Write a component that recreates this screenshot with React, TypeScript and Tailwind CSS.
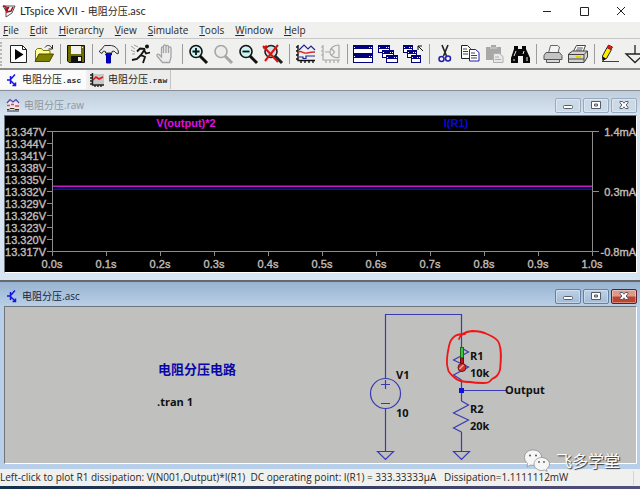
import type { ReactNode } from "react";
import clsx from "clsx";

const MENUS = ["File", "Edit", "Hierarchy", "View", "Simulate", "Tools", "Window", "Help"];
const VOLTS = ["13.347V", "13.344V", "13.341V", "13.338V", "13.335V", "13.332V", "13.329V", "13.326V", "13.323V", "13.320V", "13.317V"];
const TIMES = ["0.0s", "0.1s", "0.2s", "0.3s", "0.4s", "0.5s", "0.6s", "0.7s", "0.8s", "0.9s", "1.0s"];
const AMPS = ["1.4mA", "0.3mA", "-0.8mA"];

/* ---------- toolbar drawings, all on a 24 x 24 grid ---------- */

const lens = (color: string, glass: string) => (
  <>
    <path d="M14 14l7 7" stroke={color} strokeWidth="3" />
    <circle cx="10" cy="9.5" r="6" fill={glass} stroke={color} strokeWidth="1.6" />
  </>
);

const miniWindow = (x: number, y: number, w: number, h: number) => (
  <g key={`${x}-${y}`} shapeRendering="crispEdges">
    <rect x={x} y={y} width={w} height={h} fill="#000080" />
    <rect x={x + 1} y={y + 4} width={w - 2} height={h - 5} fill="#fff" />
    <path d={`M${x + 1} ${y + 2}h1M${x + w - 4} ${y + 2}h1M${x + w - 2} ${y + 2}h1`} stroke="#fff" />
  </g>
);

const ICONS: Record<string, ReactNode> = {
  Run: (
    <>
      <path d="M3.5 3.5h12l4 4v13h-16z" fill="#fff" stroke="#222" />
      <path d="M15.5 3.5v4h4" fill="none" stroke="#222" />
      <path d="M8 7v11l8.500-5.500z" fill="#000" />
    </>
  ),
  Open: (
    <>
      <path d="M3.500 19V8.500l2-2h4l1.500 2h7v4" fill="#ffff9a" stroke="#77770c" />
      <path d="M3 19.500l4-7.500h14.500l-4 7.500z" fill="#808000" stroke="#4a4a00" />
      <path d="M13 5.500c2-3 5-2.500 7 .5m.5-3v4h-4" fill="none" stroke="#222" />
    </>
  ),
  Save: (
    <>
      <path d="M3.500 3.500h17v17h-15.500l-1.500-1.500z" fill="#6e6e00" stroke="#111" />
      <path d="M7 4h10v8H7z" fill="#f0f0f0" />
      <path d="M7 14h11v6H7z" fill="#111" />
      <path d="M14 15h3v4h-3z" fill="#eee" />
      <path d="M18 5h1v1h-1z" fill="#fff" />
    </>
  ),
  "Control Panel": (
    <>
      <path d="M10.500 10h4v3h-1v8h-4v-8h-1z" fill="#0000c8" stroke="#0000a0" />
      <path d="M2.500 10c0-1.500.5-2 1.500-2l3.500-4.500h7c3.500.5 6.500 3 7 6.500l-.5 2-2-1-2-2-2 .5v1.500H8.500V9.500L6.500 9 5 11.500z" fill="#ececec" stroke="#333" />
    </>
  ),
  Simulate: (
    <>
      <circle cx="18" cy="4.500" r="2" fill="#111" />
      <path d="M16 7l-4 6 4 2-2 6M12 13l-4 4-5 1M16 7l-5-.5-3 3M15 8l2 3.500 4-1" fill="none" stroke="#111" strokeWidth="1.8" />
      <path d="M2 4l4 3M5 3l4 2M2 8l4 2M3 12l3 0" stroke="#888" strokeWidth=".8" />
    </>
  ),
  Halt: (
    <path
      d="M8.500 20.500L3 14c-.5-1.500 1-2.500 2-1.500L7.500 15V6c0-1.500 2-1.500 2 0v5V4c0-1.500 2.500-1.500 2.500 0v7-6.500c0-1.500 2.500-1.500 2.500 0V11 6c0-1.500 2.500-1.500 2.500 0v9.500l-1.500 5z"
      fill="#ececec"
      stroke="#a4a4a4"
      strokeWidth="1.300"
    />
  ),
  "Zoom in": (
    <>
      {lens("#111", "#c8f4f4")}
      <path d="M6.500 9.500h7M10 6v7" stroke="#111" strokeWidth="1.800" />
    </>
  ),
  "Zoom area": lens("#a6a6a6", "#ececec"),
  "Zoom out": (
    <>
      {lens("#111", "#c8f4f4")}
      <path d="M6.500 9.500h7" stroke="#111" strokeWidth="1.800" />
    </>
  ),
  "Zoom to fit": (
    <>
      {lens("#222", "#c8e4e4")}
      <path d="M2 4l15 16M17 3L4 19M2 6l4-2" fill="none" stroke="#e01010" strokeWidth="2" />
    </>
  ),
  Autorange: (
    <>
      <path d="M4 3v15.500h17M2 5h2M2 9h2M2 13h2M2 17h2M7 18v3M11 18v3M15 18v3M19 18v3" fill="none" stroke="#111" strokeWidth="1.400" />
      <path d="M5 8l5-5 4 4 3-3 4 4M5 15h4v1.500h3V14h9" fill="none" stroke="#22229c" strokeWidth="1.200" />
      <path d="M4 10c4-2 5 2 9 1s4-1 8-1" fill="none" stroke="#d03030" strokeWidth="1.400" />
    </>
  ),
  "Pick traces": (
    <path d="M4 3v15h17M2 5h2M2 9h2M2 13h2M7 18v3M11 18v3M15 18v3M19 18v3M20 3c-5 0-9 3-9 7s4 6 9 5.500M20 3v13M6 10h5M12 6l3.500 4-3 4" fill="none" stroke="#a8a8a8" strokeWidth="1.200" />
  ),
  "Tile windows": [miniWindow(2, 3, 20, 9), miniWindow(2, 12, 20, 9)],
  "Cascade windows": [miniWindow(2, 3, 12, 8), miniWindow(6, 8, 12, 8), miniWindow(10, 13, 12, 8)],
  "Close windows": (
    <>
      {[miniWindow(2, 3, 10, 8), miniWindow(6, 8, 10, 8), miniWindow(10, 13, 10, 8)]}
      <path d="M17 4l5 5M17 8V4h4" fill="none" stroke="#111" />
    </>
  ),
  Cut: (
    <>
      <path d="M9 3l4.500 11M15 3l-4.500 11" stroke="#222" strokeWidth="1.600" />
      <circle cx="8.500" cy="17" r="2.500" fill="none" stroke="#2020a8" strokeWidth="1.500" />
      <circle cx="15" cy="16.500" r="2.500" fill="none" stroke="#2020a8" strokeWidth="1.500" />
    </>
  ),
  Copy: (
    <>
      <path d="M3.500 3.500h6l3 3v10h-9z" fill="#fff" stroke="#222" />
      <path d="M5 7h4M5 9.500h5M5 12h5" stroke="#444" />
      <path d="M11.500 7.500h6l3.500 3v8.500h-9.500z" fill="#fff" stroke="#2020a8" />
      <path d="M13 11h4M13 13.500h6M13 16h6" stroke="#444" />
    </>
  ),
  Paste: (
    <>
      <path d="M3 5h5V3h5v2h5v13H3z" fill="#a8a8a8" />
      <path d="M7 6h7" stroke="#d8d8d8" />
      <path d="M10.500 11.500h6l3.500 3v6h-9.500z" fill="#e8e8e8" stroke="#b0b0b0" />
      <path d="M12 15h4M12 17.500h6" stroke="#b0b0b0" />
    </>
  ),
  Find: (
    <>
      <path d="M6 4h4v3h4V4h4v3l4 9v5h-7v-7h-5v7H3v-5l3-9z" fill="#080808" />
      <path d="M8 9l-2 5M16 9l-1 3M6 17v2M19 15v4" stroke="#e8e8e8" />
    </>
  ),
  "Print setup": (
    <>
      <path d="M7.500 11l2-7.500h7l2 1.500-1.500 6" fill="#f4f4f4" stroke="#666" />
      <path d="M5 10.500h13.500l2.500 3v4h-18v-4z" fill="#c4c4c4" stroke="#555" />
      <path d="M5.500 17.500h13v3h-13z" fill="#d8d8d8" stroke="#555" />
    </>
  ),
  Print: (
    <>
      <path d="M7 10l3.500-6.500h9L17 10" fill="#fff" stroke="#444" />
      <path d="M11 6h6M10 8h6" stroke="#555" />
      <path d="M2.500 12l4-3h15v6l-3.500 5.500H2.500z" fill="#d4d4d4" stroke="#444" />
      <path d="M3 12.500h15V20M18 12.500l3.500-3.500M3 17h15" fill="none" stroke="#444" />
      <path d="M10 15h5" stroke="#e4d400" strokeWidth="2" />
    </>
  ),
  Draw: (
    <>
      <path d="M5 18l-.5-4L9 5.500l4.500 2-5 9z" fill="#ffee00" stroke="#222" />
      <path d="M4.500 19.500v-5l3.500 2z" fill="#111" />
      <path d="M9 5.500l1.500-2.500 4 2-1.500 2.500z" fill="#e01818" stroke="#b01010" />
      <path d="M4 19.500h17" stroke="#3030b0" />
    </>
  ),
  Ground: <path d="M12 3v9M3 12h18l-9 8.500z" fill="none" stroke="#222" strokeWidth="1.300" />,
};

const TOOL_GROUPS = [
  ["Run", "Open"],
  ["Save"],
  ["Control Panel"],
  ["Simulate", "Halt"],
  ["Zoom in", "Zoom area", "Zoom out", "Zoom to fit"],
  ["Autorange", "Pick traces"],
  ["Tile windows", "Cascade windows", "Close windows"],
  ["Cut", "Copy", "Paste", "Find"],
  ["Print setup", "Print"],
  ["Draw", "Ground"],
];

function SchematicIcon() {
  return (
    <svg viewBox="0 0 12 14" className="h-3.5 w-3 shrink-0" fill="none" stroke="#1414e0" strokeWidth="1.5">
      <path d="M1 7h3M4.500 3v8M5 6l4-4.500M5 8l4 4M9.500 9.500v3H6.500" />
    </svg>
  );
}

function WaveIcon({ faded = false }: { faded?: boolean }) {
  return (
    <svg viewBox="0 0 14 14" className="size-3.5 shrink-0" fill="none">
      {faded ? (
        <>
          <rect x="1" y="4" width="12" height="7" fill="#f0e4e4" />
          <path d="M1 5l3-3.500L7 4l3-2.500L13 5" stroke="#4848b8" strokeWidth="1.200" />
          <path d="M1 7.500h3M5 6.500h3M9 8h4" stroke="#d05050" strokeWidth="1.400" />
          <path d="M1 11.500h2l1-1h4l1 1h4M1 13h12" stroke="#333" />
        </>
      ) : (
        <>
          <rect x="1" y="1" width="13" height="11" fill="#c8c8c8" />
          <path d="M2.500 0v12H14M0 2h2M0 5h2M0 8h2M0 11h2M5 12v2M8 12v2M11 12v2" stroke="#222" strokeWidth="1.400" />
          <path d="M3 7l3-3 3 2 4-2" stroke="#e01818" strokeWidth="1.600" />
        </>
      )}
    </svg>
  );
}

function CaptionButton({ kind, active }: { kind: "Minimize" | "Restore" | "Close"; active: boolean }) {
  const red = active && kind === "Close";
  return (
    <button
      aria-label={kind}
      className={clsx(
        "flex h-[15px] w-[26px] items-center justify-center rounded-[2px] border shadow-[inset_0_0_0_1px_rgba(255,255,255,0.35)]",
        red && "border-[#5c2028] bg-linear-to-b from-[#dc9a8c] from-45% to-[#bc4430] to-55%",
        !red && active && "border-[#66809f] bg-linear-to-b from-[#bdd0e6] to-[#a2bcd8]",
        !red && !active && "border-[#99aabf] bg-[#ccd9e7]",
      )}
    >
      <svg viewBox="0 0 12 10" className="h-2.5 w-3" fill="#fff" stroke="#555c68">
        {kind === "Minimize" && <rect x="1.500" y="5.500" width="9" height="3" rx="1" />}
        {kind === "Restore" && <path fillRule="evenodd" d="M1.500 1.500h9v7h-9zM4.500 4h3v2h-3z" />}
        {kind === "Close" && <path d="M2 1.500h2.500L6 3.200l1.500-1.700H10v1.300L8 5l2 2.200v1.300H7.500L6 6.800 4.500 8.500H2V7.200L4 5 2 2.800z" />}
      </svg>
    </button>
  );
}

type ChildProps = { title: string; icon: ReactNode; active?: boolean; children: ReactNode };

function ChildWindow({ title, icon, active = false, children }: ChildProps) {
  return (
    <section
      className={clsx(
        "border-t pr-[3px] pl-1",
        active ? "border-t-2 border-[#66686c] bg-[#b8cfe9] pb-[5px]" : "border-[#8a8e94] bg-[#d7e4f2] pb-[7px]",
      )}
    >
      <header
        className={clsx(
          "-mr-[3px] -ml-1 flex h-6 items-center gap-1 pt-1 pr-[3px] pl-1.5",
          active ? "bg-linear-to-b from-[#98b3d0] to-[#b9cfe8]" : "bg-linear-to-b from-[#c0cddb] to-[#d7e4f2]",
        )}
      >
        {icon}
        <h2 className={clsx("flex-1 text-[10px]", active ? "text-[#1c2430]" : "text-[#8d959f]")}>{title}</h2>
        <div className="flex gap-0.5">
          <CaptionButton kind="Minimize" active={active} />
          <CaptionButton kind="Restore" active={active} />
          <CaptionButton kind="Close" active={active} />
        </div>
      </header>
      <div className="border-t border-l border-[#70757c] border-r border-r-white border-b border-b-white">{children}</div>
    </section>
  );
}

function WavePlot() {
  return (
    <svg viewBox="5 116 631 156" className="block h-auto w-full bg-black font-['Liberation_Sans'] text-[11px]">
      <g stroke="#8c8c8c" shapeRendering="crispEdges" fill="none">
        <path d="M47 131.500H599M47 251.500H599M52.500 131v125M592.500 131v125M593 191.500h6" />
        {VOLTS.map((v, i) => (
          <path key={v} d={`M47 ${131.5 + i * 12}h5`} />
        ))}
        {TIMES.map((t, i) => (
          <path key={t} d={`M${52.5 + i * 54} 251v5`} />
        ))}
      </g>
      <rect x="53" y="185.500" width="539" height="1.500" fill="#c01cc0" />
      <rect x="53" y="188.500" width="539" height="1.500" fill="#0c0cc0" />
      <g fill="#c0bbb5" stroke="#c0bbb5" strokeWidth=".4">
        {VOLTS.map((v, i) => (
          <text key={v} x="46" y={136 + i * 12} textAnchor="end">{v}</text>
        ))}
        {TIMES.map((t, i) => (
          <text key={t} x={52 + i * 54} y="268" textAnchor="middle">{t}</text>
        ))}
        {AMPS.map((a, i) => (
          <text key={a} x="636" y={136 + i * 60} textAnchor="end">{a}</text>
        ))}
      </g>
      <g fontWeight="bold" textAnchor="middle">
        <text x="186" y="127" fill="#e010e0">V(output)*2</text>
        <text x="456" y="127" fill="#0808dc">I(R1)</text>
      </g>
    </svg>
  );
}

function Schematic() {
  return (
    <svg viewBox="5 307 631 156" className="block h-auto w-full bg-[#c0c0be] text-[11px]">
      <g fill="none" stroke="#3a3ab4" strokeWidth="1.200">
        <path d="M385.500 379V314.500H461.500V348M385.500 409v42M461.500 380v21M461.500 432v19M461 390.500h45" />
        <circle cx="385.500" cy="393.500" r="15" />
        <path d="M381 384.500h9M385.500 380v9M381 403.500h9" />
        <path d="M461.500 348l7 4-15 8 15 7-15 8 8 5" />
        <path d="M461.500 401l7 4-15 8 15 7-15 8 8 4" />
        <path d="M377.500 451.500h16l-8 8zM453.500 451.500h16l-8 8z" />
      </g>
      <rect x="459" y="388" width="5" height="5" fill="#1010e0" />

      {/* current probe on R1 */}
      <rect x="460.500" y="347.500" width="3" height="11" fill="#3cc43c" stroke="#1c6c1c" />
      <rect x="460.500" y="358" width="3" height="7" fill="#c01818" stroke="#601010" />
      <circle cx="462" cy="367.500" r="4" fill="#d83028" stroke="#701010" />
      <path d="M459.500 369l4-4" stroke="#f4b0a8" strokeWidth="1.200" />

      <g fill="#101010" fontWeight="bold">
        <text x="396" y="379">V1</text>
        <text x="396" y="417">10</text>
        <text x="470" y="360">R1</text>
        <text x="470" y="377">10k</text>
        <text x="470" y="413">R2</text>
        <text x="470" y="430">20k</text>
        <text x="505" y="394">Output</text>
        <text x="157" y="406">.tran 1</text>
        <text x="158" y="374" fill="#0808a8" className="text-[13px]">电阻分压电路</text>
      </g>

      <path
        d="M459 339c1-4 5-7 13-8 7 0 11 1 15 3 7 3 11 6 12 9 3 8 2 17 1 27-2 6-4 7-8 9-3 4-5 4-9 4-5 0-8 0-13-1-7 0-12-1-15-4-5-4-7-6-7-9-2-5-1-14 1-23 1-5 3-8 6-10 3-2 6-2 10-2"
        fill="none"
        stroke="#f01414"
        strokeWidth="1.800"
        strokeLinecap="round"
      />
    </svg>
  );
}

export default function App() {
  return (
    <div className="relative overflow-hidden bg-[#f0f0ee] font-['Open_Sans','Noto_Sans_CJK_SC',sans-serif] text-[10px] text-[#282828]">
      <header className="flex h-[22px] items-center bg-white pl-0.5">
        <svg viewBox="0 0 14 14" className="size-3.5" fill="none">
          <path d="M1 2h12l-3 7-6 4V7z" fill="#fff" stroke="#555" />
          <path d="M1 2l3 1v4M6 3l-1 5 4-1 2-4M4 7l3-4" stroke="#a01020" strokeWidth="1.600" />
        </svg>
        <h1 className="flex-1 pl-1">
          <span className="font-['Lato'] text-[11px]">LTspice XVII - </span>电阻分压
          <span className="font-['Lato'] text-[11px]">.asc</span>
        </h1>
        <div className="flex">
          {["M1 5.500h8", "M1.500 1.500h8v8h-8z", "M1 1l8 8M9 1l-8 8"].map((d, i) => (
            <button key={d} aria-label={["Minimize", "Maximize", "Close"][i]} className="flex h-[18px] w-[37px] items-center justify-center">
              <svg viewBox="0 0 11 11" className="size-[11px]" fill="none" stroke="#222">
                <path d={d} />
              </svg>
            </button>
          ))}
        </div>
      </header>

      <nav className="flex h-[17px] items-center gap-[11px] border-b border-[#c8c8c8] pl-[3px]">
        {MENUS.map((m) => (
          <button key={m}>
            <span className="underline">{m[0]}</span>
            {m.slice(1)}
          </button>
        ))}
      </nav>

      <div className="-mr-2 flex h-[31px] items-center border-b-2 border-[#8c8c8c]">
        <div className="h-6 w-[7px] shrink-0 border-l-2 border-dotted border-[#b8b8b8]" />
        {TOOL_GROUPS.map((group, i) => (
          <div key={group[0]} className={clsx("flex items-center", i > 0 && "flex-auto")}>
            {i > 0 && (
              <div className="flex flex-1 justify-center">
                <div className="h-5 w-px bg-[#9c9c9c]" />
              </div>
            )}
            {group.map((name) => (
              <button key={name} aria-label={name} className="w-[25px] shrink-0">
                <svg viewBox="0 0 24 24" className="size-6" fill="none">
                  {ICONS[name]}
                </svg>
              </button>
            ))}
          </div>
        ))}
      </div>

      <div className="flex h-5 items-start gap-0.5">
        <button className="flex h-[19px] w-[86px] items-center gap-1 bg-[#fbfbfb] pl-1.5">
          <SchematicIcon />
          <span>电阻分压<span className="font-['Liberation_Mono'] text-[8px] font-bold">.asc</span></span>
        </button>
        <button className="flex h-[19px] w-[83px] items-center gap-1 border-r border-[#c4c4c4] bg-[#ececea] pl-0.5">
          <WaveIcon />
          <span>电阻分压<span className="font-['Liberation_Mono'] text-[8px] font-bold">.raw</span></span>
        </button>
      </div>

      <ChildWindow title="电阻分压.raw" icon={<WaveIcon faded />}>
        <WavePlot />
      </ChildWindow>
      <div className="relative">
        <ChildWindow title="电阻分压.asc" icon={<SchematicIcon />} active>
          <Schematic />
        </ChildWindow>

        {/* watermark, lies over the lower corner of the sheet */}
        <div className="absolute right-5 -bottom-1 flex items-center gap-1.5">
          <svg viewBox="0 0 26 24" className="h-6 w-[26px]" fill="#f6f6f6" stroke="#777" strokeWidth=".6">
            <path d="M9 1C4 1 .5 4 .5 8.500c0 2.500 1.300 4.500 3 5.800L3 18l3.500-2c6 1.500 11-2 11-7.500C17.500 4 14 1 9 1z" />
            <path d="M17.500 8.500c-4 0-7.500 3-7.500 6.500s3.500 6.500 7.500 6.500c1 0 2-.2 3-.5l2.500 1.500-.5-2.500c1.700-1.200 3-3 3-5 0-3.500-4-6.500-8-6.500z" />
            <g fill="#555" stroke="none">
              <circle cx="6" cy="6.500" r="1" />
              <circle cx="12" cy="6.500" r="1" />
              <circle cx="15" cy="13" r=".9" />
              <circle cx="20" cy="13" r=".9" />
            </g>
          </svg>
          <span className="text-base/5 text-white [text-shadow:1px_1px_1px_#333]">飞多学堂</span>
        </div>
      </div>

      <footer className="flex h-[17px] items-center justify-between">
        <p className="whitespace-pre">
          Left-click to plot R1 dissipation: V(N001,Output)*I(R1)  DC operating point: I(R1) = 333.33333µA   Dissipation=1.1111112mW
        </p>
        <div className="mr-1.5 h-3.5 w-px bg-[#d4d4d4]" />
      </footer>
      <div className="h-[5px] bg-linear-to-r from-[#14304c] via-[#343c60] to-[#54507c]" />
    </div>
  );
}
